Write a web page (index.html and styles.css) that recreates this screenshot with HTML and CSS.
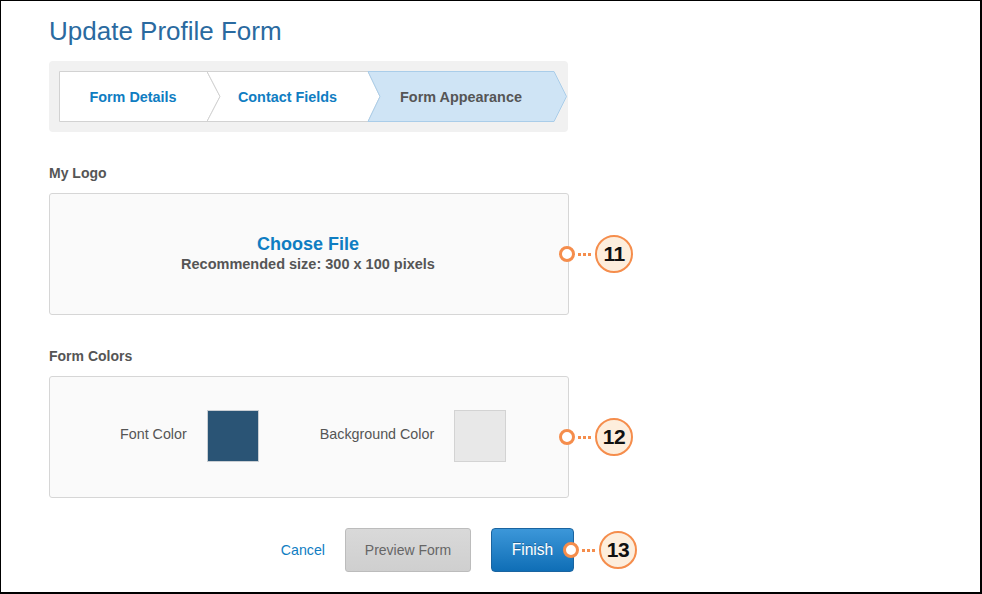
FILE: index.html
```html
<!DOCTYPE html>
<html>
<head>
<meta charset="utf-8">
<link rel="stylesheet" href="styles.css">
</head>
<body>
<div class="frame">
  <div class="main">
    <h1 class="title">Update Profile Form</h1>
    <div class="stepper">
      <div class="steps">
        <div class="step step-1">Form Details</div>
        <div class="step step-2">Contact Fields</div>
        <div class="step step-3 active">Form Appearance</div>
      </div>
    </div>

    <div class="label">My Logo</div>
    <div class="box logo-box">
      <div class="choose">Choose File</div>
      <div class="hint">Recommended size: 300 x 100 pixels</div>
      <div class="callout"><span class="pin"></span><span class="dots"><i></i><i></i><i></i></span><span class="badge">11</span></div>
    </div>

    <div class="label">Form Colors</div>
    <div class="box colors-box">
      <span class="color-label">Font Color</span>
      <span class="swatch swatch-font"></span>
      <span class="color-label bg-label">Background Color</span>
      <span class="swatch swatch-bg"></span>
      <div class="callout"><span class="pin"></span><span class="dots"><i></i><i></i><i></i></span><span class="badge">12</span></div>
    </div>

    <div class="actions">
      <a class="cancel">Cancel</a>
      <button class="btn btn-preview">Preview Form</button>
      <button class="btn btn-finish">Finish
        <span class="callout callout-btn"><span class="pin"></span><span class="dots"><i></i><i></i><i></i></span><span class="badge">13</span></span>
      </button>
    </div>
  </div>
</div>
</body>
</html>
```

FILE: styles.css
```css
html, body {
  margin: 0;
  padding: 0;
  background: #fff;
}

.frame {
  width: 982px;
  height: 594px;
  box-sizing: border-box;
  border: 1px solid #000;
  border-right-width: 2px;
  border-bottom-width: 2px;
  padding: 15px 0 0 48px;
  font-family: "Liberation Sans", Arial, sans-serif;
  overflow: hidden;
}

.main {
  width: 520px;
}

.title {
  margin: 0;
  font-size: 26px;
  line-height: 30px;
  font-weight: normal;
  color: #2a6aa0;
}

.stepper {
  margin-top: 15px;
  width: 519px;
  box-sizing: border-box;
  padding: 10px 1px 10px 10px;
  background: #f1f1f1;
  border-radius: 4px;
}

.steps {
  display: flex;
  height: 51px;
  width: 508px;
  background-image: url("data:image/svg+xml,%3Csvg xmlns='http://www.w3.org/2000/svg' width='508' height='51'%3E%3Cpolygon points='0.5,0.5 148,0.5 161,25.5 148,50.5 0.5,50.5' fill='white' stroke='%23d2d2d2'/%3E%3Cpolygon points='148,0.5 309,0.5 321,25.5 309,50.5 148,50.5 161,25.5' fill='white' stroke='%23d2d2d2'/%3E%3Cpolygon points='309,0.5 495,0.5 507.5,25.5 495,50.5 309,50.5 321,25.5' fill='%23cfe4f5' stroke='%23aacde9'/%3E%3C/svg%3E");
  background-repeat: no-repeat;
}

.step {
  flex: none;
  text-align: center;
  line-height: 51px;
  padding-top: 1px;
  box-sizing: border-box;
  font-size: 14.4px;
  font-weight: bold;
  color: #0f7dc2;
}

.step-1 { width: 148px; }
.step-2 { width: 161px; }
.step-3 { width: 186px; }
.step.active { color: #555; }

.label {
  margin-top: 32px;
  font-size: 14px;
  line-height: 18px;
  font-weight: bold;
  color: #555;
}

.box {
  position: relative;
  margin-top: 11px;
  width: 520px;
  height: 122px;
  box-sizing: border-box;
  border: 1px solid #d6d6d6;
  border-radius: 3px;
  background: #fafafa;
}

.logo-box {
  display: flex;
  flex-direction: column;
  align-items: center;
  justify-content: center;
  padding: 0 2px 1px 0;
}

.choose {
  font-size: 18px;
  line-height: 21px;
  font-weight: bold;
  color: #0f7dc2;
}

.hint {
  font-size: 14.5px;
  line-height: 19px;
  font-weight: bold;
  color: #555;
}

.colors-box {
  display: flex;
  align-items: center;
  padding-left: 70px;
  padding-bottom: 3px;
}

.color-label {
  font-size: 14.3px;
  color: #555;
  margin-bottom: 4px;
}

.bg-label {
  margin-left: 61px;
}

.swatch {
  width: 52px;
  height: 52px;
  box-sizing: border-box;
  margin-left: 20px;
}

.swatch-font {
  background: #2a5475;
  border: 1px solid #c9ced3;
}

.swatch-bg {
  background: #e8e8e8;
  border: 1px solid #d3d3d3;
}

.actions {
  margin-top: 30px;
  width: 525px;
  display: flex;
  justify-content: flex-end;
  align-items: center;
}

.cancel {
  font-size: 14.2px;
  color: #0f7dc2;
  margin-right: 20px;
}

.btn {
  height: 44px;
  box-sizing: border-box;
  font-family: "Liberation Sans", Arial, sans-serif;
  border-radius: 3px;
  padding: 0;
  margin: 0;
}

.btn-preview {
  width: 126px;
  margin-right: 20px;
  font-size: 14px;
  color: #666;
  background: linear-gradient(#d9d9d9, #cfcfcf);
  border: 1px solid #bcbcbc;
}

.btn-finish {
  position: relative;
  width: 83px;
  font-size: 15.6px;
  color: #fff;
  text-shadow: 0 -1px 0 rgba(0, 0, 0, 0.25);
  background: linear-gradient(#3c97d9, #0f6eb6);
  border: 1px solid #1a64a0;
  border-radius: 4px;
}

.callout {
  position: absolute;
  top: 50%;
  left: calc(100% - 9px);
  transform: translateY(-50%);
  display: flex;
  align-items: center;
  text-shadow: none;
}

.callout-btn {
  left: calc(100% - 10px);
}

.pin {
  width: 16px;
  height: 16px;
  box-sizing: border-box;
  border: 3px solid #f58d4c;
  border-radius: 50%;
  background: #fff;
}

.dots {
  display: flex;
  gap: 2px;
  margin: 0 3px;
}

.dots i {
  display: block;
  width: 3px;
  height: 3px;
  background: #f58d4c;
}

.badge {
  margin-left: 1px;
  width: 38px;
  height: 38px;
  box-sizing: border-box;
  border: 2.5px solid #f58d4c;
  border-radius: 50%;
  background: #fdeedd;
  display: flex;
  align-items: center;
  justify-content: center;
  font-family: "Liberation Sans", Arial, sans-serif;
  font-size: 21px;
  font-weight: bold;
  letter-spacing: -0.5px;
  color: #111;
}
```
